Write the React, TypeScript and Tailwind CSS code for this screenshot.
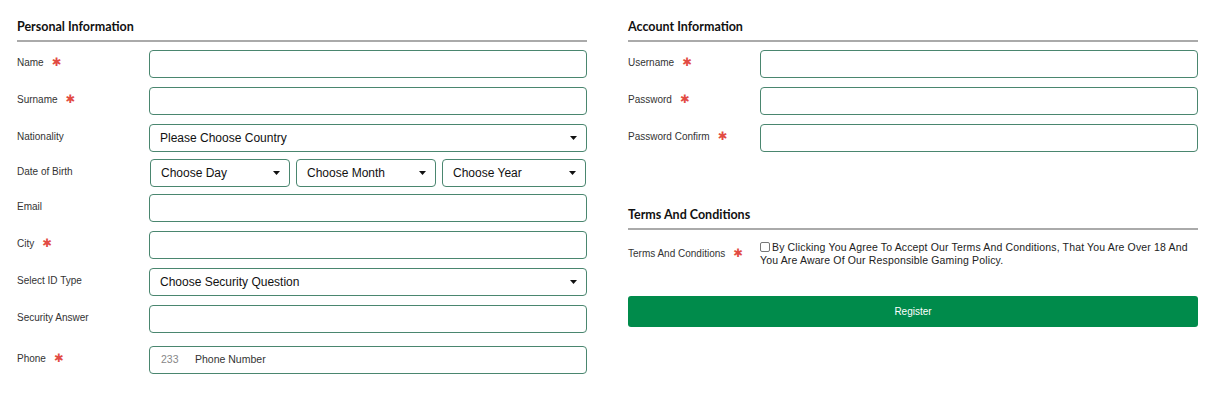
import React from "react";

const Star = () => (
  <span className="ml-[8px] text-[#e24b43] text-[11.5px] font-bold leading-none" style={{ fontFamily: "'DejaVu Sans', sans-serif" }}>✱</span>
);

const Label = ({ text, req }: { text: string; req?: boolean }) => (
  <div className="w-[132px] shrink-0 pt-[7px] text-[10px] leading-[12px] text-[#333] flex items-center" style={{ fontFamily: "'Liberation Sans', Arial, sans-serif" }}>
    <span>{text}</span>
    {req && <Star />}
  </div>
);

const Input = () => <div className="flex-1 h-[28px] border border-[#4a866f] rounded-[4px] bg-white" />;

const Arrow = () => (
  <svg width="7" height="4" viewBox="0 0 7 4" className="shrink-0">
    <path d="M0 0 L7 0 L3.5 4 Z" fill="#111" />
  </svg>
);

const Select = ({ text, className = "" }: { text: string; className?: string }) => (
  <div className={"h-[28px] border border-[#4a866f] rounded-[4px] bg-white flex items-center justify-between pl-[10px] pr-[9px] " + className}>
    <span className="text-[12px] text-[#111]" style={{ fontFamily: "'Liberation Sans', Arial, sans-serif" }}>{text}</span>
    <Arrow />
  </div>
);

const Row = ({ label, req, mt, children }: { label: string; req?: boolean; mt: string; children: React.ReactNode }) => (
  <div className={"flex items-start " + mt}>
    <Label text={label} req={req} />
    <div className="flex-1 flex">{children}</div>
  </div>
);

const Heading = ({ text }: { text: string }) => (
  <div className="border-b-2 border-[#aaaaaa] pt-[1px] pb-[5px]">
    <h2 className="text-[12.5px] leading-[16px] font-bold text-[#111]" style={{ fontFamily: "Lato, 'Open Sans', sans-serif" }}>{text}</h2>
  </div>
);

export default function App() {
  return (
    <div className="w-[1216px] h-[402px] bg-white pl-[17px] pr-[18px] pt-[18px]" style={{ fontFamily: "'Liberation Sans', Arial, sans-serif" }}>
      <div className="grid grid-cols-2 gap-x-[41px]">
        <div>
          <Heading text="Personal Information" />
          <div className="mt-[8px] flex flex-col">
            <Row label="Name" req mt="mt-0"><Input /></Row>
            <Row label="Surname" req mt="mt-[9px]"><Input /></Row>
            <Row label="Nationality" mt="mt-[9px]"><Select text="Please Choose Country" className="flex-1" /></Row>
            <Row label="Date of Birth" mt="mt-[7px]">
              <div className="ml-[1px] grid grid-cols-[140px_140px_144px] gap-[6px]">
                <Select text="Choose Day" />
                <Select text="Choose Month" />
                <Select text="Choose Year" />
              </div>
            </Row>
            <Row label="Email" mt="mt-[7px]"><Input /></Row>
            <Row label="City" req mt="mt-[9px]"><Input /></Row>
            <Row label="Select ID Type" mt="mt-[9px]"><Select text="Choose Security Question" className="flex-1" /></Row>
            <Row label="Security Answer" mt="mt-[9px]"><Input /></Row>
            <Row label="Phone" req mt="mt-[13px]">
              <div className="flex-1 h-[28px] border border-[#4a866f] rounded-[4px] bg-white flex items-center text-[10.5px]">
                <span className="pl-[11px] w-[45px] text-[#888]">233</span>
                <span className="text-[#333]">Phone Number</span>
              </div>
            </Row>
          </div>
        </div>
        <div>
          <Heading text="Account Information" />
          <div className="mt-[8px] flex flex-col">
            <Row label="Username" req mt="mt-0"><Input /></Row>
            <Row label="Password" req mt="mt-[9px]"><Input /></Row>
            <Row label="Password Confirm" req mt="mt-[9px]"><Input /></Row>
          </div>
          <div className="mt-[54px]">
            <Heading text="Terms And Conditions" />
          </div>
          <div className="mt-[11px] flex items-start">
            <div className="w-[132px] shrink-0 pt-[7px] text-[10px] leading-[12px] text-[#333] flex items-center">
              <span>Terms And Conditions</span>
              <Star />
            </div>
            <div className="flex-1 text-[10.5px] leading-[13px] tracking-[0.15px] text-[#222]">
              <span className="inline-block w-[10px] h-[10px] border border-[#777] rounded-[2px] bg-white align-[-1px] mr-[2px]" />
              By Clicking You Agree To Accept Our Terms And Conditions, That You Are Over 18 And
              <br />
              You Are Aware Of Our Responsible Gaming Policy.
            </div>
          </div>
          <button className="mt-[29px] w-full h-[31px] bg-[#008b4b] rounded-[3px] text-white text-[10px] flex items-center justify-center">
            Register
          </button>
        </div>
      </div>
    </div>
  );
}
